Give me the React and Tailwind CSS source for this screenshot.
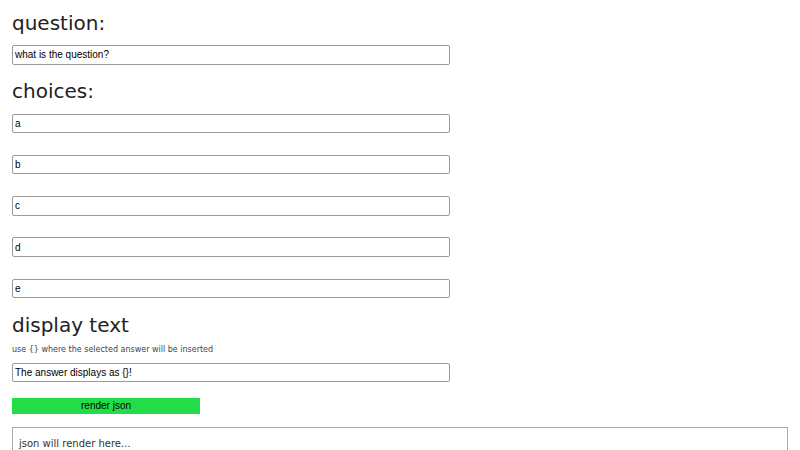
import React, { useState } from 'react'

const inputCls =
  "block w-[438px] h-[19.5px] px-[2px] border border-[#9a9a9a] rounded-[2px] bg-white text-black text-[10px] leading-[12px] font-['Liberation_Sans',Arial,sans-serif] outline-none"

const headingCls = "text-[20px] leading-[23px] font-normal text-[#222]"

export default function App() {
  const [question, setQuestion] = useState('what is the question?')
  const [choices, setChoices] = useState(['a', 'b', 'c', 'd', 'e'])
  const [display, setDisplay] = useState('The answer displays as {}!')
  const [json, setJson] = useState('')

  const render = () =>
    setJson(JSON.stringify({ question, choices, display }, null, 2))

  return (
    <div className="px-[12px] pt-[12px] font-['DejaVu_Sans',sans-serif] bg-white min-h-screen">
      {/* Question */}
      <h2 className={headingCls}>question:</h2>
      <input
        className={`${inputCls} mt-[10px]`}
        value={question}
        onChange={e => setQuestion(e.target.value)}
      />

      {/* Choices */}
      <h2 className={`${headingCls} mt-[15px]`}>choices:</h2>
      <div className="mt-[11px] flex flex-col gap-[21.75px]">
        {choices.map((c, i) => (
          <input
            key={i}
            className={inputCls}
            value={c}
            onChange={e => setChoices(choices.map((x, j) => (j === i ? e.target.value : x)))}
          />
        ))}
      </div>

      {/* Display text */}
      <h2 className={`${headingCls} mt-[16px]`}>display text</h2>
      <p className="mt-[7.5px] text-[8px] leading-[9px] text-[#444]">
        use {'{}'} where the selected answer will be inserted
      </p>
      <input
        className={`${inputCls} mt-[9px]`}
        value={display}
        onChange={e => setDisplay(e.target.value)}
      />

      <button
        onClick={render}
        className="block mt-[16px] w-[188px] h-[16px] bg-[#22dd48] text-black text-[10px] leading-[16px] text-center font-['Liberation_Sans',Arial,sans-serif]"
      >
        render json
      </button>

      {/* Output */}
      <div className="mt-[13px] border border-[#aaa] pt-[10px] px-[6px] pb-[10px] min-h-[60px] text-[10px] leading-[12px] text-[#333] whitespace-pre">
        {json || 'json will render here...'}
      </div>
    </div>
  )
}
